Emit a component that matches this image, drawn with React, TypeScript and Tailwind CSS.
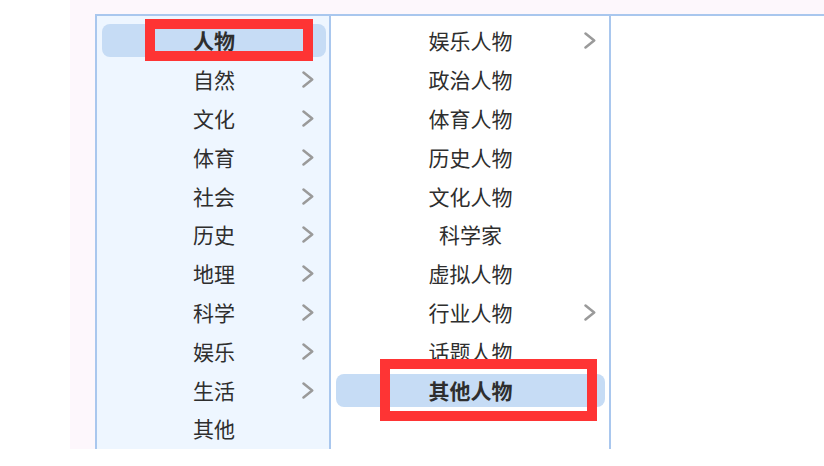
import React from "react";

const font = { fontFamily: '"Noto Sans CJK SC", "Noto Sans", sans-serif' };

function Chevron() {
  return (
    <svg width="12" height="17" viewBox="0 0 12 17" className="block">
      <polyline points="1.5,1.5 10.2,8.5 1.5,15.5" fill="none" stroke="#9a9a9a" strokeWidth="2.5" strokeLinecap="round" strokeLinejoin="round" />
    </svg>
  );
}

type Item = { label: string; arrow?: boolean; selected?: boolean };

const left: Item[] = [
  { label: "人物", selected: true },
  { label: "自然", arrow: true },
  { label: "文化", arrow: true },
  { label: "体育", arrow: true },
  { label: "社会", arrow: true },
  { label: "历史", arrow: true },
  { label: "地理", arrow: true },
  { label: "科学", arrow: true },
  { label: "娱乐", arrow: true },
  { label: "生活", arrow: true },
  { label: "其他" },
];

const middle: Item[] = [
  { label: "娱乐人物", arrow: true },
  { label: "政治人物" },
  { label: "体育人物" },
  { label: "历史人物" },
  { label: "文化人物" },
  { label: "科学家" },
  { label: "虚拟人物" },
  { label: "行业人物", arrow: true },
  { label: "话题人物" },
  { label: "其他人物", selected: true },
];

function Row({ item, padL, padR, arrowMr }: { item: Item; padL: string; padR: string; arrowMr: string }) {
  return (
    <div className={`h-[38.8px] flex items-center ${padL} ${padR}`}>
      <div
        className={`h-[33px] w-full rounded-[8px] grid grid-cols-[1fr_auto_1fr] items-center ${item.selected ? "bg-[#c6dcf5]" : ""}`}
      >
        <div />
        <div className={`text-[21px] leading-none text-[#2e2e2e] ${item.selected ? "font-bold" : ""}`}>{item.label}</div>
        <div className={`flex justify-end ${arrowMr}`}>{item.arrow ? <Chevron /> : null}</div>
      </div>
    </div>
  );
}

export default function App() {
  return (
    <div className="relative w-[824px] h-[466px] bg-white overflow-hidden" style={font}>
      <div className="flex h-[449px]">
        <div className="w-[70px] bg-white" />
        <div className="flex-1 bg-[#fdf7fc] pt-[14px] pl-[25px] flex">
          <div className="flex-1 flex border-t-2 border-l-2 border-[#a9c7ee] bg-white">
            <div className="w-[234px] bg-[#eef6ff] border-r-2 border-[#a9c7ee] pt-[5.6px]">
              {left.map((it) => (
                <Row key={it.label} item={it} padL="pl-[5px]" padR="pr-[3px]" arrowMr="mr-[12px]" />
              ))}
            </div>
            <div className="w-[280px] bg-white border-r-2 border-[#a9c7ee] pt-[5.6px]">
              {middle.map((it) => (
                <Row key={it.label} item={it} padL="pl-[5px]" padR="pr-[4px]" arrowMr="mr-[9px]" />
              ))}
            </div>
            <div className="flex-1 bg-white" />
          </div>
        </div>
      </div>
      <div className="absolute left-[145px] top-[19px] w-[168px] h-[42px] border-[10px] border-[#fe3434]" />
      <div className="absolute left-[380px] top-[359px] w-[217px] h-[62px] border-[10px] border-[#fe3434]" />
    </div>
  );
}
